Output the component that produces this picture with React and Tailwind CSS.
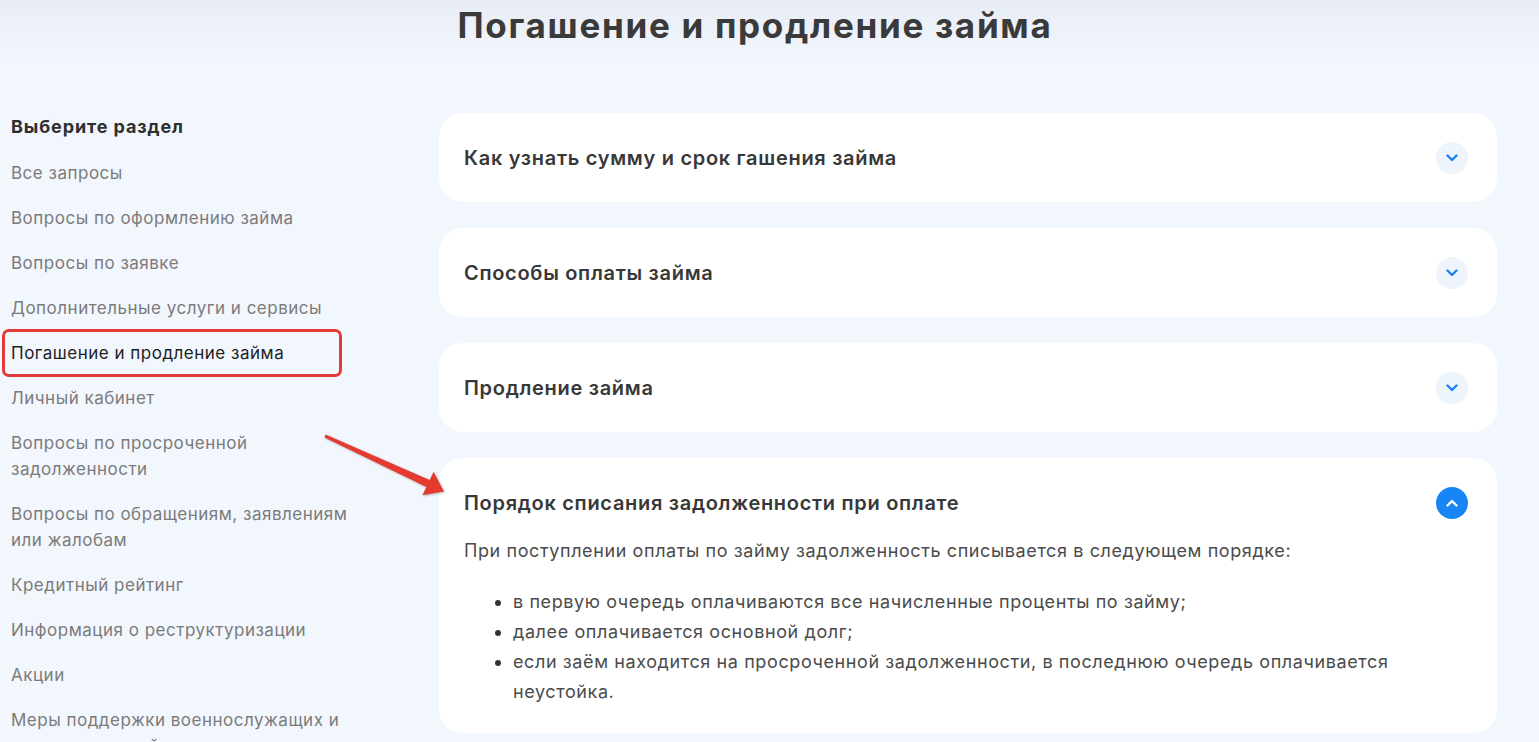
const sections = [
  { label: "Все запросы" },
  { label: "Вопросы по оформлению займа" },
  { label: "Вопросы по заявке" },
  { label: "Дополнительные услуги и сервисы" },
  { label: "Погашение и продление займа", active: true },
  { label: "Личный кабинет" },
  { label: "Вопросы по просроченной задолженности" },
  { label: "Вопросы по обращениям, заявлениям или жалобам" },
  { label: "Кредитный рейтинг" },
  { label: "Информация о реструктуризации" },
  { label: "Акции" },
  { label: "Меры поддержки военнослужащих и членов их семей" },
];

const questions = [
  "Как узнать сумму и срок гашения займа",
  "Способы оплаты займа",
  "Продление займа",
];

function Chevron({ up }) {
  return (
    <svg width="12" height="8" viewBox="0 0 12 8" fill="none">
      <path
        d={up ? "M1.5 6.5 L6 2 L10.5 6.5" : "M1.5 1.5 L6 6 L10.5 1.5"}
        stroke="currentColor"
        strokeWidth="2.4"
        strokeLinecap="round"
        strokeLinejoin="round"
      />
    </svg>
  );
}

function Card({ title, open, children }) {
  return (
    <div className="bg-white rounded-[24px] px-[25px]">
      <div className="h-[89px] flex items-center justify-between pr-[4px]">
        <h3 className="text-[20px] font-semibold tracking-[0.7px] text-[#383838]">{title}</h3>
        {open ? (
          <span className="w-[32px] h-[32px] rounded-full bg-[#1786f4] text-white flex items-center justify-center">
            <Chevron up />
          </span>
        ) : (
          <span className="w-[32px] h-[32px] rounded-full bg-[#eef4fb] text-[#1a82f0] flex items-center justify-center">
            <Chevron />
          </span>
        )}
      </div>
      {children}
    </div>
  );
}

export default function App() {
  return (
    <div
      className="relative min-h-screen h-[742px] overflow-hidden bg-[#f2f6fd]"
      style={{ fontFamily: "Inter, 'Noto Sans', sans-serif" }}
    >
      <div className="bg-gradient-to-b from-[#e8ecf4] to-[#f2f6fd] h-[60px] flex justify-center pr-[29px]">
        <h1 className="text-[35px] leading-[52px] font-bold text-[#3a3a3a] tracking-[1.7px] -mt-[1px]">
          Погашение и продление займа
        </h1>
      </div>

      <div className="flex pt-[53px]">
        <aside className="w-[439px] shrink-0 pl-[11px]">
          <div className="w-[360px]">
            <p className="text-[18px] leading-[26px] font-bold tracking-[0.9px] text-[#2f2f2f] mt-[1px] mb-[20px]">
              Выберите раздел
            </p>
            <ul className="flex flex-col gap-[19px]">
              {sections.map((s) => (
                <li
                  key={s.label}
                  className={
                    "relative text-[17px] leading-[26px] tracking-[0.5px] " +
                    (s.active ? "text-[#1e1e1e]" : "text-[#7b7b7b]")
                  }
                >
                  {s.label}
                  {s.active && (
                    <span className="absolute -left-[9px] -top-[11px] w-[340px] h-[48px] border-[3px] border-[#e53935] rounded-[7px]" />
                  )}
                </li>
              ))}
            </ul>
          </div>
        </aside>

        <main className="flex-1 mr-[42px] flex flex-col gap-[26px]">
          {questions.map((q) => (
            <Card key={q} title={q} />
          ))}
          <Card title="Порядок списания задолженности при оплате" open>
            <div className="-mt-[11px] pb-[26px] pr-[30px] text-[18px] tracking-[0.6px] text-[#4b4b4b]">
              <p className="leading-[30px]">
                При поступлении оплаты по займу задолженность списывается в следующем порядке:
              </p>
              <ul className="list-disc pl-[49px] mt-[21px] leading-[30px] marker:text-[#333]">
                <li>в первую очередь оплачиваются все начисленные проценты по займу;</li>
                <li>далее оплачивается основной долг;</li>
                <li>
                  если заём находится на просроченной задолженности, в последнюю очередь оплачивается
                  неустойка.
                </li>
              </ul>
            </div>
          </Card>
        </main>
      </div>

      <svg
        className="absolute left-0 top-0 pointer-events-none"
        width="1539"
        height="742"
        viewBox="0 0 1539 742"
      >
        <polygon
          points="325.6,434.6 429.7,479.9 433.6,471.8 444,491.5 422.4,495.2 426.3,487.1 324.4,437.4"
          fill="#e53a2f"
          style={{ filter: "drop-shadow(1px 1px 1px rgba(0,0,0,0.25))" }}
        />
      </svg>
    </div>
  );
}
